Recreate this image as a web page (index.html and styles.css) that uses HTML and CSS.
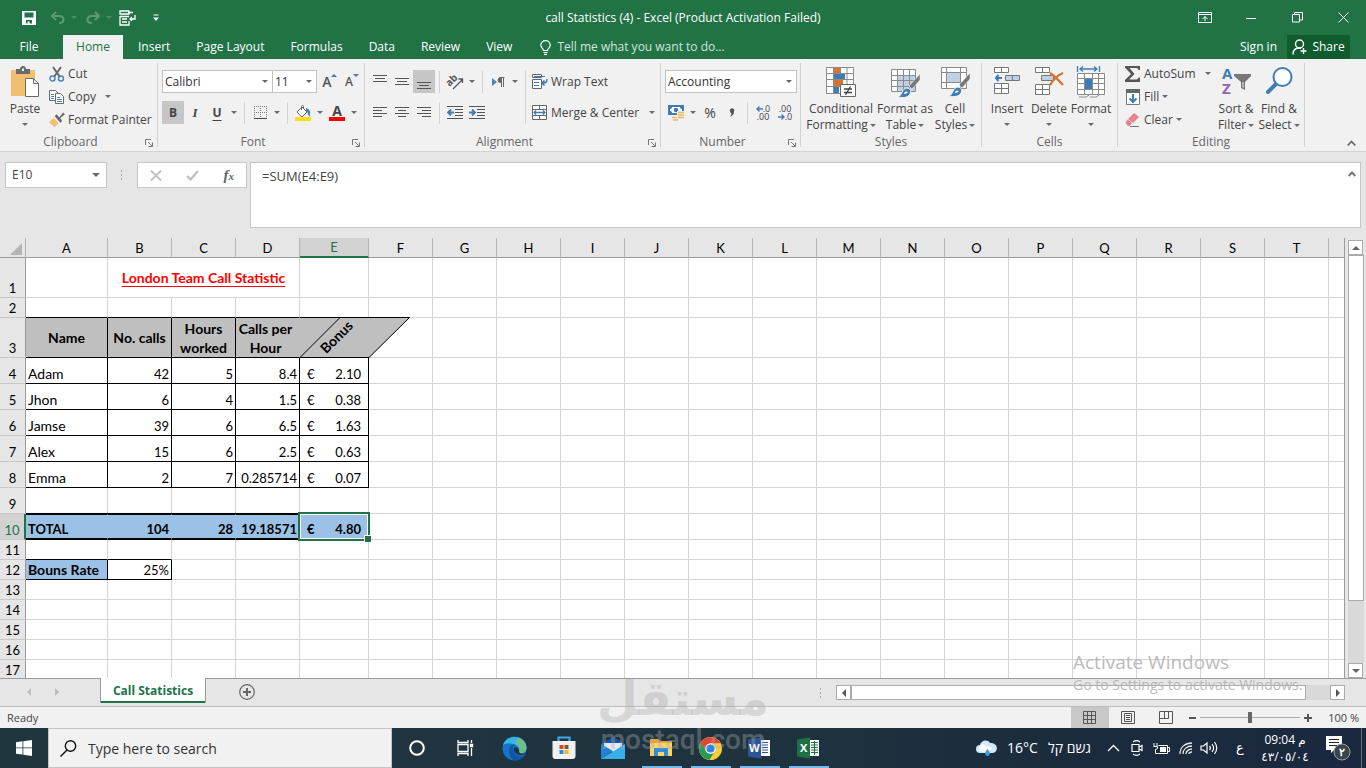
FILE: index.html
```html
<!DOCTYPE html>
<html lang="en">
<head>
<meta charset="utf-8">
<title>call Statistics (4) - Excel</title>
<link rel="stylesheet" href="styles.css">
</head>
<body>
<header class="titlebar">
  <div class="quick">
    <button class="qbtn" aria-label="Save"><svg width="16" height="16" viewBox="0 0 16 16"><path fill="#fff" fill-rule="evenodd" d="M1 1h14v14H1zM3.500 2.500v5h9v-5zM5 10v3.500h1.500v-2h2v2H11V10z"/></svg></button>
    <button class="qbtn wide" aria-label="Undo"><svg width="16" height="14" viewBox="0 0 16 14" fill="none" stroke="#5c9a76" stroke-width="2"><path d="M6 1 2 5l4 4M2 5h7c6 0 6 7 0 7"/></svg><span class="caret faint"></span></button>
    <button class="qbtn wide" aria-label="Redo"><svg width="16" height="14" viewBox="0 0 16 14" fill="none" stroke="#5c9a76" stroke-width="2"><path d="m10 1 4 4-4 4M14 5H7c-6 0-6 7 0 7"/></svg><span class="caret faint"></span></button>
    <button class="qbtn form" aria-label="Form"><svg width="17" height="16" viewBox="0 0 17 16" fill="none" stroke="#fff" stroke-width="1.300"><path d="M1 1h9v3H1zM9 2.500h5M1 6.500h9M1 6v9h9v-4M3 9h5M3 12h5M16 5v4h-5m2-2-2 2 2 2"/></svg></button>
    <button class="qbtn" aria-label="Customize"><svg width="8" height="8" viewBox="0 0 8 8"><path stroke="#fff" d="M1.500 1h5"/><path fill="#fff" d="M1 3.500h6L4 7z"/></svg></button>
  </div>
  <h1 class="doc-title">call Statistics (4) - Excel (Product Activation Failed)</h1>
  <div class="window-btns">
    <button aria-label="Ribbon options"><svg width="14" height="12" viewBox="0 0 14 12" fill="none" stroke="#fff"><path d="M.5.500h13v10H.500zM.5 2.500h13M7 9V4.500M4.500 7 7 4.500 9.500 7"/></svg></button>
    <button aria-label="Minimize"><svg width="10" height="10" viewBox="0 0 10 10"><path stroke="#fff" d="M0 5.500h10"/></svg></button>
    <button aria-label="Restore"><svg width="11" height="11" viewBox="0 0 11 11" fill="none" stroke="#fff"><path d="M.5 2.500h7v7.500h-7zM2.500 2.500v-2h8v7.500H8"/></svg></button>
    <button aria-label="Close"><svg width="11" height="11" viewBox="0 0 11 11"><path stroke="#fff" d="m.5.500 10 10m0-10-10 10"/></svg></button>
  </div>
</header>
<nav class="tabs">
  <button class="tab file">File</button>
  <button class="tab active">Home</button>
  <button class="tab">Insert</button>
  <button class="tab">Page Layout</button>
  <button class="tab">Formulas</button>
  <button class="tab">Data</button>
  <button class="tab">Review</button>
  <button class="tab">View</button>
  <button class="tell"><svg width="11" height="15" viewBox="0 0 11 15" fill="none" stroke="#fff" stroke-width="1.200"><path d="M3.500 10.500c0-2-2.700-2.500-2.700-5.300a4.700 4.500 0 0 1 9.400 0c0 2.800-2.700 3.300-2.700 5.300zM3.500 12.500h4M4 14.300h3"/></svg>Tell me what you want to do...</button>
  <div class="account">
    <button class="signin">Sign in</button>
    <button class="share"><svg width="16" height="16" viewBox="0 0 16 16" fill="none" stroke="#fff" stroke-width="1.400"><circle cx="7.500" cy="5" r="4"/><path d="M1 15.500C1 12 3 9.500 6 9l3 .3M11.500 9v6M8.500 12h6"/></svg>Share</button>
  </div>
</nav>

<section class="ribbon" aria-label="Ribbon">
  <div class="group g-clip">
    <div class="body">
      <button class="big w-paste"><svg width="30" height="32" viewBox="0 0 30 32"><path fill="#f0c070" d="M1 4h24v26H1z"/><path fill="#6b6b6b" d="M6 3h4c0-4 6-4 6 0h4v5H6z"/><path fill="#f0f0f0" d="M12 2.500h2V5h-2z"/><path fill="#fff" stroke="#6b6b6b" d="M15.500 12.500h8l5 5v13h-13z"/><path fill="none" stroke="#6b6b6b" d="M23.500 12.500v5h5"/></svg><span>Paste</span><span class="caret"></span></button>
      <div class="stack">
        <button class="line"><svg width="16" height="16" viewBox="0 0 16 16" fill="none"><path stroke="#666" stroke-width="2" d="m4 1 7 10M12 1 5 11"/><circle cx="3.500" cy="12.500" r="2.500" stroke="#4a82b8" stroke-width="1.400"/><circle cx="12" cy="12.500" r="2.500" stroke="#4a82b8" stroke-width="1.400"/></svg>Cut</button>
        <button class="line"><svg width="16" height="16" viewBox="0 0 16 16" fill="#fff" stroke="#6b6b6b"><path d="M.5 1.500h6l3 3v7h-9z"/><path d="M6.500 4.500h5l3 3v7h-8z"/><path fill="none" stroke="#4a82b8" d="M2 5.500h3M2 7.500h3M2 9.500h3M8 8.500h3M8 10.500h5M8 12.500h5"/></svg>Copy<span class="caret gap"></span></button>
        <button class="line"><svg width="16" height="16" viewBox="0 0 17 16"><path fill="#f0c070" d="m5 6 5 5-4 5-6-6z"/><path fill="#6b6b6b" d="m6 4 2-2 3 3 4-5 2 2-5 4 2 3-2 2z"/></svg>Format Painter</button>
      </div>
    </div>
    <div class="caption"><span>Clipboard</span><button class="launch" aria-label="Clipboard settings"><svg width="8" height="8" viewBox="0 0 8 8" fill="none" stroke="#777"><path d="M.5 6V.500H6M3 3l4 4M7.500 3.500v4h-4"/></svg></button></div>
  </div>

  <div class="group g-font">
    <div class="rows">
      <div class="row">
        <label class="combo c-font"><select aria-label="Font"><option>Calibri</option></select></label><label class="combo c-size"><select aria-label="Font size"><option>11</option></select></label>
        <button class="ib grow-a" aria-label="Increase font size"><b>A</b><i class="up"></i></button>
        <button class="ib shrink-a" aria-label="Decrease font size"><b>A</b><i class="down"></i></button>
      </div>
      <div class="row">
        <button class="ib on bold">B</button><button class="ib ital">I</button><button class="ib under">U</button><button class="ib drop" aria-label="Underline menu"><span class="caret"></span></button>
        <span class="sep"></span>
        <button class="ib" aria-label="Borders"><svg width="13" height="13" viewBox="0 0 13 13" fill="none" stroke="#777"><path stroke-dasharray="1 1" d="M0 .5h13M0 6.500h13M.5 0v12M6.500 0v12M12.500 0v12"/><path stroke="#444" d="M0 12.500h13"/></svg></button><button class="ib drop" aria-label="Borders menu"><span class="caret"></span></button>
        <span class="sep"></span>
        <button class="ib" aria-label="Fill colour"><svg width="16" height="16" viewBox="0 0 16 16"><path fill="#fff" stroke="#666" d="m7 2 5 5-5 5-5-5zM6.500 5V1.500c0-1.500 2-1.500 2 0V4"/><path fill="#4a82b8" d="M11 3c4 1 5 4 3.500 9C13 10 13 7 11 6z"/><path fill="#fedc1c" d="M0 12h16v4H0z"/></svg></button><button class="ib drop" aria-label="Fill menu"><span class="caret"></span></button>
        <button class="ib fontcolor" aria-label="Font colour"><b>A</b></button><button class="ib drop" aria-label="Font colour menu"><span class="caret"></span></button>
      </div>
    </div>
    <div class="caption"><span>Font</span><button class="launch" aria-label="Font settings"><svg width="8" height="8" viewBox="0 0 8 8" fill="none" stroke="#777"><path d="M.5 6V.500H6M3 3l4 4M7.500 3.500v4h-4"/></svg></button></div>
  </div>

  <div class="group g-align">
    <div class="body">
      <div class="rows align-left">
        <div class="row">
          <button class="ib" aria-label="Top align"><svg width="14" height="16" viewBox="0 0 14 16" stroke="#555"><path d="M0 1.500h14M2 4.500h10M0 7.500h14"/></svg></button><button class="ib" aria-label="Middle align"><svg width="14" height="16" viewBox="0 0 14 16" stroke="#555"><path d="M0 4.500h14M2 7.500h10M0 10.500h14"/></svg></button><button class="ib on" aria-label="Bottom align"><svg width="14" height="16" viewBox="0 0 14 16" stroke="#555"><path d="M0 8.500h14M2 11.500h10M0 14.500h14"/></svg></button>
          <span class="sep"></span>
          <button class="ib" aria-label="Orientation"><svg class="spill" width="17" height="16" viewBox="0 0 17 16"><text x="0" y="9" font-size="10" font-weight="700" fill="#555" transform="rotate(-45 6 8)">ab</text><path fill="none" stroke="#555" stroke-width="1.300" d="M6 15 15.500 5.500M11.500 5h4v4"/></svg></button><button class="ib drop" aria-label="Orientation menu"><span class="caret"></span></button>
          <span class="sep"></span>
          <button class="ib" aria-label="Text direction"><svg width="13" height="10" viewBox="0 0 13 10"><path fill="#4a82b8" d="M0 1v8l5-4z"/><path fill="#666" d="M12.500 0v1H12v9h-1V1h-1v9H9V6C4.500 6 4.500 0 9 0z"/></svg></button><button class="ib drop" aria-label="Direction menu"><span class="caret"></span></button>
        </div>
        <div class="row">
          <button class="ib" aria-label="Align left"><svg width="14" height="14" viewBox="0 0 14 14" stroke="#555"><path d="M0 1.500h14M0 4.500h9M0 7.500h14M0 10.500h9"/></svg></button><button class="ib" aria-label="Centre"><svg width="14" height="14" viewBox="0 0 14 14" stroke="#555"><path d="M0 1.500h14M3 4.500h8M0 7.500h14M3 10.500h8"/></svg></button><button class="ib" aria-label="Align right"><svg width="14" height="14" viewBox="0 0 14 14" stroke="#555"><path d="M0 1.500h14M5 4.500h9M0 7.500h14M5 10.500h9"/></svg></button>
          <span class="sep"></span>
          <button class="ib" aria-label="Decrease indent"><svg width="16" height="14" viewBox="0 0 16 14" fill="none" stroke="#555"><path d="M0 .5h16M8 3.500h8M8 6.500h8M8 9.500h8M0 12.500h16"/><path stroke="#3f7cb5" stroke-width="1.800" d="M7 6.500H1M4 3.500l-3 3 3 3"/></svg></button><button class="ib" aria-label="Increase indent"><svg width="16" height="14" viewBox="0 0 16 14" fill="none" stroke="#555"><path d="M0 .5h16M8 3.500h8M8 6.500h8M8 9.500h8M0 12.500h16"/><path stroke="#3f7cb5" stroke-width="1.800" d="M0 6.500h6M3 3.500l3 3-3 3"/></svg></button>
        </div>
      </div>
      <span class="sep tall"></span>
      <div class="rows align-right">
        <div class="row"><button class="line"><svg width="16" height="16" viewBox="0 0 16 16" fill="#fff" stroke="#666"><path d="M.5.500h9v3h-9zM.5 5.500h9v9h-9z"/><path fill="none" stroke="#3f7cb5" d="M2 2.500h11M2 8.500h5M2 11.500h5"/><path fill="none" stroke="#3f7cb5" stroke-width="1.500" d="M15 5c0 4-2 4-5 4m2.500-2.500L10 9l2.500 2.500"/></svg>Wrap Text</button></div>
        <div class="row"><button class="line"><svg width="16" height="16" viewBox="0 0 16 16" fill="#fff" stroke="#666"><path d="M.5.500h14v14H.500zM.5 4.500h14M.5 10.500h14M7.500.500v4M7.500 10.500v4"/><path fill="none" stroke="#3f7cb5" stroke-width="1.300" d="M2 7.500h11M4 5.500l-2 2 2 2M11 5.500l2 2-2 2"/></svg>Merge &amp; Center<span class="caret gap"></span></button></div>
      </div>
    </div>
    <div class="caption"><span>Alignment</span><button class="launch" aria-label="Alignment settings"><svg width="8" height="8" viewBox="0 0 8 8" fill="none" stroke="#777"><path d="M.5 6V.500H6M3 3l4 4M7.500 3.500v4h-4"/></svg></button></div>
  </div>

  <div class="group g-num">
    <div class="rows">
      <div class="row"><label class="combo c-num"><select aria-label="Number format"><option>Accounting</option></select></label></div>
      <div class="row">
        <button class="ib" aria-label="Accounting format"><svg width="17" height="17" viewBox="0 0 17 17"><path fill="#3f7cb5" d="M0 1h16v10H0z"/><path fill="#fff" d="M4 3h8c0 1.500 1 2 2 2v2c-1 0-2 .5-2 2H4C4 7.500 3 7 2 7V5c1 0 2-.5 2-2z"/><circle cx="8" cy="6" r="2.300" fill="#3f7cb5"/><path fill="#f0f0f0" d="M9 7h8v6H9zM4 12h8v5H4z"/><path stroke="#edb75f" stroke-width="1.500" d="M10 8.500h6M10 11h6M10 13.500h6M4 13.500h5M5 16h5"/></svg></button><button class="ib drop" aria-label="Currency menu"><span class="caret"></span></button>
        <button class="ib percent">%</button><button class="ib" aria-label="Comma style"><svg width="6" height="9" viewBox="0 0 6 9"><path fill="#555" d="M1 3a2.200 2.200 0 1 1 4 .5C5 6 4 7.500 1 9c1-2 1.500-3 1.500-3.500C1.500 5 1 4 1 3z"/></svg></button>
        <span class="sep"></span>
        <button class="ib dec" aria-label="Increase decimal"><span><svg width="7" height="6" viewBox="0 0 7 6" fill="none" stroke="#3f7cb5" stroke-width="1.400"><path d="M7 3H1M3.500.500 1 3l2.500 2.500"/></svg>.0</span><span>.00</span></button>
        <button class="ib dec" aria-label="Decrease decimal"><span>.00</span><span><svg width="7" height="6" viewBox="0 0 7 6" fill="none" stroke="#3f7cb5" stroke-width="1.400"><path d="M0 3h6M3.500.500 6 3 3.500 5.500"/></svg>.0</span></button>
      </div>
    </div>
    <div class="caption"><span>Number</span><button class="launch" aria-label="Number settings"><svg width="8" height="8" viewBox="0 0 8 8" fill="none" stroke="#777"><path d="M.5 6V.500H6M3 3l4 4M7.500 3.500v4h-4"/></svg></button></div>
  </div>

  <div class="group g-styles">
    <div class="body">
      <button class="big w-cond"><svg width="30" height="32" viewBox="0 0 30 32"><path fill="#fff" stroke="#8a8a8a" d="M.5 1.500h27v26H.500zM.5 7.500h27M.5 13.500h27M.5 20.500h27M7.500 1.500v26M14.500 1.500v26M21 1.500v26"/><path fill="#d9722e" d="M8 2h6v5H8zM8 14h9v6H8z"/><path fill="#3f7cb5" d="M8 8h11v5H8zM8 21h5v6H8z"/><path fill="#fff" stroke="#666" d="M14.500 18.500h15v12h-15z"/><path stroke="#444" stroke-width="1.300" d="M18 23h8M18 26.500h8M24.500 20.500l-5 8.500"/></svg><span>Conditional</span><span>Formatting<span class="caret in"></span></span></button>
      <button class="big w-fmt"><svg width="30" height="32" viewBox="0 0 30 32"><path fill="#fff" stroke="#8a8a8a" d="M1.500 3.500h24v22h-24zM1.500 9.500h24"/><path fill="#bdd0e4" d="M8 10h17v15H8z"/><path fill="none" stroke="#8a8a8a" d="M7.500 3.500v22M13.500 3.500v22M19.500 3.500v22M1.500 14.500h24M1.500 20.500h24"/><path fill="#777" stroke="#f0f0f0" stroke-width=".6" d="M30 8v6l-8 9-3-3z"/><path fill="#3f7cb5" stroke="#f0f0f0" d="M8 31c4-1 4-9 9-9 4 1 4 3 3 6-2 4-8 4-12 3z"/><path fill="#fff" d="M14 28c0-3 3-3 4-2-1 1-2 2-4 2z"/></svg><span>Format as</span><span>Table<span class="caret in"></span></span></button>
      <button class="big w-cell"><svg width="30" height="32" viewBox="0 0 30 32"><path fill="#fff" stroke="#8a8a8a" d="M1.500 1.500h25v21h-25zM1.500 6.500h25M1.500 16.500h25M6.500 1.500v21M20.500 1.500v21"/><path fill="#bdd0e4" d="M7 7h13v9H7z"/><path fill="#777" stroke="#f0f0f0" stroke-width=".6" d="M30 7v6l-8 9-3-3z"/><path fill="#3f7cb5" stroke="#f0f0f0" d="M9 30c4-1 4-9 9-9 4 1 4 3 3 6-2 4-8 4-12 3z"/><path fill="#fff" d="M15 27c0-3 3-3 4-2-1 1-2 2-4 2z"/></svg><span>Cell</span><span>Styles<span class="caret in"></span></span></button>
    </div>
    <div class="caption"><span>Styles</span></div>
  </div>

  <div class="group g-cells">
    <div class="body">
      <button class="big w-cells"><svg width="28" height="32" viewBox="0 0 28 32" fill="#fff" stroke="#777"><path d="M1.500 1.500h14v5h-14zM8.500 1.500v5M1.500 17.500h14v10h-14zM8.500 17.500v10M1.500 22.500h14"/><path fill="#bdd0e4" d="M12.500 9.500h14v5h-14zM19.500 9.500v5"/><path fill="none" stroke="#3f7cb5" stroke-width="2" d="M9 12H3M5.500 9 3 12l2.500 3"/></svg><span>Insert</span><span class="caret"></span></button>
      <button class="big w-cells"><svg width="30" height="32" viewBox="0 0 30 32" fill="#fff" stroke="#777"><path d="M1.500 1.500h14v5h-14zM8.500 1.500v5M1.500 18.500h14v10h-14zM8.500 18.500v10M1.500 23.500h14"/><path fill="#bdd0e4" d="M7.500 9.500h12v5h-12z"/><path fill="none" stroke="#d9722e" stroke-width="2.400" d="M16 7c4 2 10 9 13 12M29 7c-5 2-10 7-13 12"/></svg><span>Delete</span><span class="caret"></span></button>
      <button class="big w-cells"><svg width="30" height="32" viewBox="0 0 30 32" fill="#fff" stroke="#8a8a8a"><path d="M1.500 7.500h27v21h-27zM1.500 12.500h27M1.500 17.500h27M1.500 23.500h27M8.500 7.500v21M16.500 7.500v21M22.500 7.500v21"/><path fill="#3f7cb5" stroke="none" d="M9 13h7v10H9z"/><path fill="none" stroke="#3f7cb5" stroke-width="1.300" d="M1.500 0v6M23.500 0v6M4 3h17M7 .5 4 3l3 2.500M18 .5 21 3l-3 2.500"/><path d="M3 31h7l3-2M14 31h6l3-2"/></svg><span>Format</span><span class="caret"></span></button>
    </div>
    <div class="caption"><span>Cells</span></div>
  </div>

  <div class="group g-edit">
    <div class="body">
      <div class="stack edit">
        <button class="line"><svg width="16" height="16" viewBox="0 0 16 16"><path fill="#555" d="M0 0h15v4h-1.500c-.3-1.300-1-2-2.500-2H4.500l5 6-5.500 5.500h7c1.500 0 2.200-.7 2.500-2H15V16H0v-2l6-6-6-6.500z"/></svg>AutoSum<span class="caret gap"></span></button>
        <button class="line"><svg width="16" height="16" viewBox="0 0 16 16"><path fill="#fff" stroke="#777" d="M1.500.500h13v15h-13z"/><path fill="#666" d="M1 0h14v4H1z"/><path fill="none" stroke="#3f7cb5" stroke-width="2" d="M8 5v8M4.500 9.500 8 13l3.500-3.500"/></svg>Fill<span class="caret in"></span></button>
        <button class="line"><svg width="16" height="14" viewBox="0 0 16 14"><path fill="#e8838d" d="m9 0 5 4-6 6-5-4z"/><path fill="#e8838d" stroke="#e8838d" d="m2.500 7 4 3-2 2.500H3L1 10z"/><path stroke="#777" d="M5 13.500h9"/></svg>Clear<span class="caret in"></span></button>
      </div>
      <button class="big w-sort"><svg class="spill" width="30" height="32" viewBox="0 0 30 32"><text x="1" y="13" font-size="15" font-weight="700" fill="#3f7cb5">A</text><text x="1" y="28" font-size="15" font-weight="700" fill="#9163b5">Z</text><path fill="#777" d="M13 8h17v2l-6 6v8l-4-2v-6l-7-6z"/><path fill="#f0f0f0" d="m21.500 16 1 .2V22l-1-.7z"/></svg><span>Sort &amp;</span><span>Filter<span class="caret in"></span></span></button>
      <button class="big w-find"><svg width="30" height="32" viewBox="0 0 30 32"><path stroke="#3f7cb5" stroke-width="4" stroke-linecap="round" d="m4 26 8-8"/><circle cx="18.500" cy="11" r="9" fill="#fff" stroke="#3f7cb5" stroke-width="2"/></svg><span>Find &amp;</span><span>Select<span class="caret in"></span></span></button>
    </div>
    <div class="caption"><span>Editing</span></div>
  </div>
  <button class="collapse" aria-label="Collapse the ribbon"><svg width="9" height="7" viewBox="0 0 9 7" fill="none" stroke="#666" stroke-width="1.800"><path d="m.7 5.500 3.800-4 3.800 4"/></svg></button>
</section>

<section class="formula">
  <div class="namebox"><input aria-label="Name box" value="E10"><span class="caret"></span></div>
  <span class="dots"></span>
  <div class="fx">
    <button aria-label="Cancel"><svg width="12" height="11" viewBox="0 0 12 11"><path stroke="#c0c0c0" stroke-width="1.800" d="m1 .5 10 10m0-10-10 10"/></svg></button>
    <button aria-label="Enter"><svg width="13" height="11" viewBox="0 0 13 11" fill="none"><path stroke="#c0c0c0" stroke-width="2.400" d="m1 6 3.500 3.500L12 1"/></svg></button>
    <button class="fxb" aria-label="Insert function">f<small>x</small></button>
  </div>
  <div class="fbar"><textarea aria-label="Formula bar">=SUM(E4:E9)</textarea><button aria-label="Collapse formula bar"><svg width="8" height="6" viewBox="0 0 8 6" fill="none" stroke="#777" stroke-width="2"><path d="M.7 5 4 1.500 7.300 5"/></svg></button></div>
</section>

<main class="sheet">
  <div class="grid">
    <table>
      <colgroup><col class="k-head"><col class="k-a"><col><col><col><col class="k-e"><col><col><col><col><col><col><col><col><col><col><col><col><col><col><col><col class="k-rest"></colgroup>
      <thead><tr><th class="corner"><i></i></th><th>A</th><th>B</th><th>C</th><th>D</th><th class="sel">E</th><th>F</th><th>G</th><th>H</th><th>I</th><th>J</th><th>K</th><th>L</th><th>M</th><th>N</th><th>O</th><th>P</th><th>Q</th><th>R</th><th>S</th><th>T</th><th class="last"></th></tr></thead>
      <tbody>
        <tr class="h40"><th>1</th><td></td><td colspan="3" class="title">London Team Call Statistic</td><td></td></tr>
        <tr class="h20 pre"><th>2</th><td></td><td></td><td></td><td></td><td></td></tr>
        <tr class="h40 head"><th>3</th><td class="bk">Name</td><td class="bk">No. calls</td><td class="bk">Hours<br>worked</td><td class="bk noright">Calls per<br>Hour</td><td class="slant"><svg width="110" height="41" viewBox="0 0 110 41"><path fill="#bfbfbf" d="M0 1h109L69 41H0z"/><path fill="none" stroke="#000" d="M0 .5h109.500L69 40.500M40 .5 0 40.500M0 40.500h69"/></svg><span>Bonus</span></td></tr>
        <tr class="h26 box"><th>4</th><td>Adam</td><td>42</td><td>5</td><td>8.4</td><td class="acc"><div><span>€</span><span>2.10</span></div></td></tr>
        <tr class="h26 box"><th>5</th><td>Jhon</td><td>6</td><td>4</td><td>1.5</td><td class="acc"><div><span>€</span><span>0.38</span></div></td></tr>
        <tr class="h26 box"><th>6</th><td>Jamse</td><td>39</td><td>6</td><td>6.5</td><td class="acc"><div><span>€</span><span>1.63</span></div></td></tr>
        <tr class="h26 box"><th>7</th><td>Alex</td><td>15</td><td>6</td><td>2.5</td><td class="acc"><div><span>€</span><span>0.63</span></div></td></tr>
        <tr class="h26 box"><th>8</th><td>Emma</td><td>2</td><td>7</td><td>0.285714</td><td class="acc"><div><span>€</span><span>0.07</span></div></td></tr>
        <tr class="h26"><th>9</th><td></td><td></td><td></td><td></td><td></td></tr>
        <tr class="h26 total"><th class="sel">10</th><td class="tot">TOTAL</td><td class="tot">104</td><td class="tot">28</td><td class="tot">19.18571</td><td class="acc tot cursor"><div><span>€</span><span>4.80</span></div></td></tr>
        <tr class="h20 pre12"><th>11</th><td></td><td></td><td></td><td></td><td></td></tr>
        <tr class="h20"><th>12</th><td class="bk rate">Bouns Rate</td><td class="bk">25%</td><td></td><td></td><td></td></tr>
        <tr class="h20"><th>13</th></tr>
        <tr class="h20"><th>14</th></tr>
        <tr class="h20"><th>15</th></tr>
        <tr class="h20"><th>16</th></tr>
        <tr class="h20"><th>17</th></tr>
      </tbody>
    </table>
  </div>
  <div class="vscroll">
    <button class="sb" aria-label="Scroll up"><i class="t-up"></i></button>
    <div class="vthumb"></div>
    <div class="vtrack"></div>
    <button class="sb" aria-label="Scroll down"><i class="t-down"></i></button>
  </div>
</main>

<section class="sheetbar">
  <button class="nav" aria-label="Previous sheet"><i class="t-left pale"></i></button><button class="nav" aria-label="Next sheet"><i class="t-right pale"></i></button>
  <button class="sheettab">Call Statistics</button>
  <button class="add" aria-label="New sheet"><svg width="16" height="16" viewBox="0 0 16 16" fill="none" stroke="#666"><circle cx="8" cy="8" r="7.300" stroke-width="1.200"/><path stroke-width="2" d="M4 8h8M8 4v8"/></svg></button>
  <div class="hscroll">
    <span class="dots"></span>
    <button class="sb" aria-label="Scroll left"><i class="t-left"></i></button>
    <div class="hthumb"></div><div class="htrack"></div>
    <button class="sb" aria-label="Scroll right"><i class="t-right"></i></button>
  </div>
</section>

<footer class="status">
  <span>Ready</span>
  <div class="views">
    <button class="view on" aria-label="Normal view"><svg width="14" height="14" viewBox="0 0 14 14" fill="none" stroke="#555"><path d="M.5.500h12v12H.500zM4.500.500v12M8.500.500v12M.5 4.500h12M.5 8.500h12"/></svg></button>
    <button class="view" aria-label="Page layout view"><svg width="14" height="14" viewBox="0 0 14 14" fill="none" stroke="#555"><path d="M.5.500h13v12H.500zM3.500 2.500h7v8h-7zM5 4.500h4M5 6.500h4M5 8.500h4"/></svg></button>
    <button class="view" aria-label="Page break view"><svg width="14" height="14" viewBox="0 0 14 14" fill="none" stroke="#555"><path d="M.5.500h13v12H.500zM5.500.500v7M.5 7.500h9v-7"/></svg></button>
    <button class="zoom" aria-label="Zoom out"><i class="minus"></i></button>
    <input type="range" min="0" max="100" value="50" aria-label="Zoom">
    <button class="zoom" aria-label="Zoom in"><i class="minus plus"></i></button>
    <span class="pct">100 %</span>
  </div>
</footer>

<footer class="taskbar">
  <button class="start" aria-label="Start"><svg width="16" height="16" viewBox="0 0 16 16" fill="#fff"><path d="m0 2.200 6.500-.9v6.200H0zM7.300 1.200 16 0v7.500H7.300zM0 8.300h6.500v6.200L0 13.700zM7.300 8.300H16V16l-8.700-1.200z"/></svg></button>
  <label class="search"><svg width="17" height="17" viewBox="0 0 17 17" fill="none" stroke="#111" stroke-width="1.400"><circle cx="10.500" cy="6" r="5.200"/><path d="M7 10 .5 16.500"/></svg><input type="text" placeholder="Type here to search" aria-label="Search"></label>
  <button class="task" aria-label="Cortana"><svg width="16" height="16" viewBox="0 0 16 16"><circle cx="8" cy="8" r="6.800" fill="none" stroke="#fff" stroke-width="2"/></svg></button>
  <button class="task" aria-label="Task view"><svg width="17" height="16" viewBox="0 0 17 16" fill="none" stroke="#fff" stroke-width="1.300"><path d="M1 4.500h10v7H1zM1 0v2.500h10V0M1 16v-2.500h10V16M14.500 0v3M14.500 8v8"/><path fill="#fff" d="M13.500 4.500h2v2h-2z"/></svg></button>
  <button class="task" aria-label="Edge"><svg width="25" height="25" viewBox="0 0 25 25"><circle cx="12.500" cy="12.500" r="12" fill="#1673c8"/><path fill="#35b5e8" d="M1 9C4-2 23-2 24.500 11c0 5-4 7-8 6C20 10 10 5 1 9z"/><path fill="#6fbf8a" d="M16 1.500c6 2 8 6 8.500 10 0 5-4 7-8 5.500C19 13 17 9 13 8z"/><path fill="#0d56a6" d="M7 14c0-4 3-6 6-5-3 2-3 9 3 11 3 1 6-.5 7-1.500-2 5-8 7-12 5-3-2-4-6-4-9.500z"/><path fill="#20343e" d="M12 12c-1 4 3 8 9 7l3-2c-2 1-6 1-7-1 1-3-3-6-5-4z"/></svg></button>
  <button class="task" aria-label="Store"><svg width="24" height="24" viewBox="0 0 24 24"><path fill="none" stroke="#38a9e4" stroke-width="2.200" d="M6.500 6V1.500h11V6"/><path fill="#f1f1f1" d="M.5 5h23v15c0 2-1 3-3 3h-17c-2 0-3-1-3-3z"/><path fill="#e5411f" d="M7.500 9h4v4h-4z"/><path fill="#7b5a2a" d="M12.500 9h4v4h-4z"/><path fill="#1e90dd" d="M7.500 14h4v4h-4z"/><path fill="#f7b51d" d="M12.500 14h4v4h-4z"/></svg></button>
  <button class="task" aria-label="Mail"><svg width="24" height="22" viewBox="0 0 24 22"><path fill="#1356a8" d="m0 7 12-7 12 7v4H0z"/><path fill="#e8eef5" d="M3 6h18v4l-9 5-9-5z"/><path fill="#1f82d2" d="M0 7l12 7L0 22z"/><path fill="#39b0ea" d="M24 7v15H0z"/></svg></button>
  <button class="task run" aria-label="File Explorer"><svg width="23" height="18" viewBox="0 0 23 18"><path fill="#e9a13a" d="M0 0h8l2 2h12v5H0z"/><path fill="#fbd567" d="M0 4h22v13H0z"/><path fill="#2f8fd8" d="M4 9h14v8h-4v-4H8v4H4z"/></svg></button>
  <button class="task run" aria-label="Chrome"><svg width="23" height="23" viewBox="0 0 24 24"><circle cx="12" cy="12" r="12" fill="#fdcd38"/><path fill="#e04636" d="M1.600 6A12 12 0 0 1 22.400 6.500H12L7 14z"/><path fill="#279a55" d="M1.600 6A12 12 0 0 0 11 24l5-8.500-4 1.500-5-3z"/><circle cx="12" cy="12" r="5.500" fill="#fff"/><circle cx="12" cy="12" r="4.300" fill="#2e86e0"/></svg></button>
  <button class="task run" aria-label="Word"><svg width="23" height="22" viewBox="0 0 23 22"><path fill="#fff" d="M12 3h10v16H12z"/><path stroke="#2b579a" d="M14 5.500h6M14 8h6M14 10.500h6M14 13h6M14 15.500h6"/><path fill="#2b579a" d="m0 2.500 13-2v21l-13-2z"/><text x="1" y="15" font-size="11" font-weight="700" fill="#fff">W</text></svg></button>
  <button class="task run" aria-label="Excel"><svg width="23" height="22" viewBox="0 0 23 22"><path fill="#fff" d="M12 3h10v16H12z"/><path stroke="#217346" stroke-width="1.200" d="M14 5.500h7M14 8h7M14 10.500h7M14 13h7M14 15.500h7M17.500 4v14"/><path fill="#1e7145" d="m0 2.500 13-2v21l-13-2z"/><text x="3" y="15" font-size="11" font-weight="700" fill="#fff">X</text></svg></button>
  <div class="tray">
    <button class="weather"><svg width="21" height="17" viewBox="0 0 21 17"><path fill="#cfeaf8" d="M4 13a4 4 0 0 1 0-8C5 0 12-1 14 3c5 0 8 3 6.500 7-1 3-4 3-5 3z"/><path fill="#fff" d="M4 5c3-2 6 0 6 2 3-2 6 0 6 2-3 3-9 3-13 2z"/><path fill="#3b9be8" d="M11.500 9c3 3 3 7 0 7s-3-4 0-7z"/></svg><span>16°C</span><span dir="rtl" lang="he">גשם קל</span></button>
    <button class="ti" aria-label="Show hidden icons"><svg width="13" height="8" viewBox="0 0 13 8" fill="none" stroke="#fff" stroke-width="1.300"><path d="m1 7 5.500-5.500L12 7"/></svg></button>
    <button class="ti" aria-label="Meet now"><svg width="12" height="16" viewBox="0 0 12 16" fill="none" stroke="#fff" stroke-width="1.200"><path d="M1 4.500h7v7H1zM8 7l3-1.500v5L8 9M2 2c2-1.500 5-1.500 7 0M2 14c2 1.500 5 1.500 7 0"/></svg></button>
    <button class="ti" aria-label="Battery"><svg width="17" height="11" viewBox="0 0 17 11"><path fill="none" stroke="#fff" d="M5.500 2.500h9v8h-9M14.500 4.500h2v4h-2M1 0v3M4 0v3M.5 3.500h4v2l-2 1v4h3"/><path fill="#fff" d="M7 4h6v5H7z"/></svg></button>
    <button class="ti" aria-label="Network"><svg width="13" height="13" viewBox="0 0 13 13" fill="none" stroke="#e6e6e6" stroke-width="1.300"><path d="M1 12C1 5 6 1 13 1M4 12c0-5 4-8 9-8M7 12c0-3 3-5 6-5M10 12c0-1.500 1-2 3-2"/></svg></button>
    <button class="ti" aria-label="Volume"><svg width="18" height="14" viewBox="0 0 18 14" fill="none" stroke="#fff" stroke-width="1.200"><path d="M1 5h2.500L7 2v10L3.500 9H1zM9.500 5c1 1.200 1 2.800 0 4M12 3c2 2.500 2 5.500 0 8M14.500 1c3 4 3 8 0 12"/></svg></button>
    <button class="lang" lang="ar">ع</button>
    <button class="clock" lang="ar"><span dir="ltr">09:04 م</span><span dir="ltr">٤٣/٠٥/٠٤</span></button>
    <button class="note" aria-label="Notifications"><svg width="26" height="26" viewBox="0 0 26 26"><path fill="#fff" d="M1 1h16v14H9l-3 3v-3H1z"/><path stroke="#222" stroke-width="1.200" d="M4 4.500h10M4 7.500h10M4 10.500h10"/><circle cx="17" cy="17" r="8" fill="#38464c" stroke="#9aa0a4"/><text x="14" y="21" font-size="11" font-weight="700" fill="#fff">٢</text></svg></button>
  </div>
</footer>

<div class="activate"><strong>Activate Windows</strong><span>Go to Settings to activate Windows.</span></div>
<div class="brand"><span class="brand-ar" lang="ar">مستقل</span><span class="brand-en">mostaql.com</span></div>
<script src="grid.js"></script>
</body>
</html>
```
FILE: styles.css
```css
* { box-sizing: border-box; }
body {
  margin: 0;
  height: 100vh;
  display: flex;
  flex-direction: column;
  overflow: hidden;
  position: relative;
  background: #e6e6e6;
  color: #444;
  font: 12px/16px "Open Sans", "Noto Sans", sans-serif;
}
button, input, select, textarea { font: inherit; color: inherit; }
button { background: none; border: 0; padding: 0; margin: 0; white-space: nowrap; }
svg { display: block; flex: none; }
svg.spill { overflow: visible; }
svg text { font-family: "Open Sans", sans-serif; }

.caret { display: inline-block; flex: none; border: 3px solid transparent; border-top-color: #6b6b6b; border-bottom: 0; }
.caret.in { margin-left: 2px; vertical-align: middle; }
.caret.gap { margin-left: 6px; }
.caret.faint { border-top-color: #4c9068; }

.titlebar { flex: none; height: 35px; background: #217346; color: #fff; display: grid; grid-template-columns: 1fr auto 1fr; align-items: center; }
.quick { display: flex; align-items: center; height: 30px; padding-left: 18px; }
.qbtn { width: 22px; display: flex; justify-content: center; align-items: center; gap: 5px; }
.qbtn.wide { width: 35px; }
.quick .qbtn:nth-child(2) { margin-left: 6px; }
.qbtn.form { margin: 0 7px 0 0; }
.doc-title { margin: 0; font-size: 12px; font-weight: 400; }
.window-btns { display: flex; justify-content: flex-end; height: 30px; }
.window-btns button { width: 46px; display: flex; justify-content: center; align-items: center; }

.tabs { flex: none; height: 24px; background: #217346; color: #fff; display: flex; }
.tab { padding: 0 13px; }
.tab.file { width: 58px; margin-right: 5px; }
.tab.active { background: #f1f1f1; color: #217346; width: 60px; padding: 0; margin-right: 2px; }
.tell { display: flex; align-items: center; gap: 6px; color: #d3e3da; margin-left: 15px; }
.account { margin-left: auto; display: flex; padding-right: 16px; }
.signin { padding: 0 10px; }
.share { background: #0f5c2f; width: 63px; display: flex; justify-content: center; align-items: center; gap: 4px; }

.ribbon { flex: none; height: 93px; background: #f1f1f1; border-bottom: 1px solid #d2d2d2; display: flex; padding: 4px 0; position: relative; }
.group { flex: none; display: flex; flex-direction: column; justify-content: space-between; border-right: 1px solid #d4d4d4; }
.g-clip { width: 158px; }
.g-font { width: 207px; }
.g-align { width: 296px; }
.g-num { width: 140px; }
.g-styles { width: 181px; }
.g-cells { width: 136px; }
.g-edit { width: 187px; }
.body { display: flex; padding-left: 4px; }
.caption { display: flex; align-items: center; justify-content: center; height: 10px; color: #666; position: relative; padding-right: 16px; }
.g-styles .caption, .g-cells .caption, .g-edit .caption { padding-right: 0; }
.launch { position: absolute; right: 4px; top: 2px; }
.big { display: flex; flex-direction: column; align-items: center; }
.big svg { margin: 3px 0; }
.big > .caret { margin-top: 6px; }
.w-paste { width: 42px; }
.w-cond { width: 72px; }
.w-fmt { width: 56px; }
.w-cell { width: 44px; }
.w-cells { width: 42px; }
.w-sort { width: 44px; margin-left: 2px; }
.w-find { width: 42px; }
.stack { display: flex; flex-direction: column; padding-left: 3px; margin-top: -1px; }
.stack.edit { width: 90px; }
.line { display: flex; align-items: center; gap: 3px; height: 23px; }
.line .caret.in { margin-left: 0; }
.rows { display: flex; flex-direction: column; gap: 8px; padding: 7px 0 0 4px; }
.row { display: flex; align-items: center; height: 23px; }
.ib { width: 22px; height: 23px; flex: none; display: flex; align-items: center; justify-content: center; position: relative; }
.ib.on { background: #c6c6c6; }
.ib.drop { width: 12px; }
.bold { font-weight: 700; }
.ital { font: italic 700 13px "Liberation Serif", serif; }
.under { font-weight: 700; text-decoration: underline; text-underline-offset: 3px; }
.sep { width: 1px; height: 22px; background: #d4d4d4; margin: 0 4px; flex: none; }
.sep.tall { height: 54px; margin: 7px 6px 0 0; }
.combo { position: relative; height: 23px; display: flex; background: #fff; border: 1px solid #c3c3c3; }
.combo::after { content: ""; position: absolute; right: 4px; top: 9px; border: 3px solid transparent; border-top-color: #666; border-bottom: 0; pointer-events: none; }
.combo select { appearance: none; border: 0; background: none; width: 100%; padding: 0 2px; outline: 0; color: #333; }
.c-font { width: 111px; }
.c-size { width: 44px; border-left: 0; }
.c-num { width: 132px; }
.grow-a { font-size: 14px; margin-left: 1px; }
.shrink-a { font-size: 12px; }
.grow-a b, .shrink-a b { font-weight: 600; color: #555; padding-right: 4px; }
.up, .down { position: absolute; right: 3px; top: 4px; border: 3px solid transparent; }
.up { border-bottom-color: #3f7cb5; border-top: 0; }
.down { border-top-color: #3f7cb5; border-bottom: 0; }
.fontcolor b { width: 16px; height: 16px; line-height: 12px; border-bottom: 4px solid #f00; font-size: 14px; text-align: center; }
.align-left { width: 156px; padding-left: 0; }
.align-right { padding-left: 0; }
.align-right .caret.gap { margin-left: 7px; }
.percent { font-size: 14px; }
.dec { flex-direction: column; font-size: 9px; line-height: 8px; }
.dec span { display: flex; align-items: center; }
.collapse { position: absolute; right: 10px; bottom: 4px; }

.formula { flex: none; height: 86px; padding: 10px 5px; display: flex; align-items: flex-start; }
.namebox { width: 102px; height: 26px; background: #fff; border: 1px solid #c6c6c6; display: flex; align-items: center; padding: 0 6px; }
.namebox input { border: 0; padding: 0; width: 80px; flex: 1; outline: 0; }
.namebox .caret { border-width: 4px 4px 0; }
.dots { width: 3px; height: 11px; margin: 7px 14px 0 13px; background: radial-gradient(circle, #aaa 1px, transparent 1px) 0 0 / 3px 4px; }
.fx { width: 110px; height: 26px; background: #fff; border: 1px solid #c6c6c6; display: flex; justify-content: space-around; align-items: center; }
.fxb { font: italic 700 15px "Liberation Serif", serif; color: #666; }
.fxb small { font-size: 11px; }
.fbar { flex: 1; margin-left: 3px; height: 66px; background: #fff; border: 1px solid #c6c6c6; display: flex; align-items: flex-start; }
.fbar textarea { flex: 1; height: 60px; border: 0; outline: 0; resize: none; padding: 5px 11px; background: none; overflow: hidden; font-size: 13px; }
.fbar button { padding: 8px 4px; }

.sheet { flex: 1; min-height: 0; display: flex; overflow: hidden; }
.grid { flex: 1; overflow: hidden; border-right: 1px solid #9b9b9b; }
table { width: 100%; table-layout: fixed; border-collapse: separate; border-spacing: 0; font: 13px/18px Lato, "Open Sans", sans-serif; color: #000; }
col { width: 64px; }
.k-head { width: 26px; }
.k-a { width: 82px; }
.k-e { width: 69px; }
.k-rest { width: auto; }
th { font-weight: 400; background: #e6e6e6; padding: 0; }
thead th { height: 20px; border-right: 1px solid #b5b5b5; border-bottom: 1px solid #9b9b9b; }
thead th.last { border-right: 0; }
thead th.sel { background: #d2d2d2; color: #217346; border-bottom: 2px solid #217346; line-height: 17px; }
.corner i { display: block; margin: 3px 3px 0 auto; width: 12px; height: 12px; background: #b4b4b4; clip-path: polygon(100% 0, 100% 100%, 0 100%); }
tbody th { border-right: 1px solid #9b9b9b; border-bottom: 1px solid #c9c9c9; vertical-align: bottom; }
tbody th.sel { background: #d2d2d2; color: #217346; border-right: 2px solid #217346; }
td { background: #fff; border-right: 1px solid #d4d4d4; border-bottom: 1px solid #d4d4d4; padding: 0 2px; vertical-align: bottom; text-align: right; white-space: nowrap; }
td:last-child { border-right: 0; }
th + td { text-align: left; font-size: 14px; }
.h20 { height: 20px; }
.h26 { height: 26px; }
.h40 { height: 40px; }
td.title { color: #f00; font-weight: 700; font-size: 14px; text-decoration: underline; text-underline-offset: 3px; text-align: center; vertical-align: middle; }
.pre td:nth-child(-n+6) { border-bottom-color: #000; }
td.bk, .box td:nth-child(-n+6) { border-color: #000; }
.head td.bk { background: #bfbfbf; font-weight: 700; font-size: 14px; text-align: center; vertical-align: middle; line-height: 19px; padding: 0; }
.head td.noright { border-right-color: #bfbfbf; padding-right: 4px; }
.slant { position: relative; overflow: visible; border-color: #000; }
.slant svg { position: absolute; left: 0; top: -1px; z-index: 1; }
.slant span { position: absolute; z-index: 2; left: 17px; top: 10px; font-weight: 700; font-size: 14px; transform: rotate(-45deg); }
.acc { position: relative; }
.acc div { display: flex; justify-content: space-between; padding: 0 5px; }
td.tot { background: #9bc2e6; font-weight: 700; font-size: 13px; border-right-color: #9bc2e6; border-bottom: 2px solid #000; box-shadow: 0 -1px #000; border-top: 1px solid #000; line-height: 17px; }
.total .cursor { box-shadow: none; border-color: #9bc2e6; border-width: 0 1px 2px 0; }
.cursor::after { content: ""; position: absolute; inset: -2px -2px -3px -2px; border: 2px solid #217346; outline: 1px solid #fff; outline-offset: -3px; }
.cursor::before { content: ""; position: absolute; right: -3px; bottom: -4px; width: 6px; height: 6px; background: #217346; border: solid #fff; border-width: 1px 0 0 1px; z-index: 1; }
.pre12 td:nth-child(-n+3) { border-bottom-color: #000; }
td.rate { background: #9bc2e6; font-weight: 700; }

.vscroll { width: 21px; flex: none; padding: 2px 2px 0 3px; display: flex; flex-direction: column; }
.sb { width: 15px; height: 15px; flex: none; background: #fff; border: 1px solid #ababab; display: flex; align-items: center; justify-content: center; }
.vthumb { flex: 347; background: #fff; border: 1px solid #ababab; }
.vtrack { flex: 62; background: #d9d9d9; }
.t-up, .t-down, .t-left, .t-right { border: 4px solid transparent; }
.t-up { border-bottom-color: #666; border-top: 0; }
.t-down { border-top-color: #666; border-bottom: 0; }
.t-left { border-right-color: #555; border-left: 0; }
.t-right { border-left-color: #555; border-right: 0; }
.t-left.pale { border-right-color: #bcbcbc; }
.t-right.pale { border-left-color: #bcbcbc; }

.sheetbar { flex: none; height: 28px; border-top: 1px solid #9b9b9b; display: flex; align-items: flex-start; padding-left: 15px; }
.nav { width: 28px; height: 25px; display: flex; align-items: center; justify-content: center; }
.sheettab { width: 106px; height: 25px; margin: -1px 0 0 29px; padding-top: 1px; background: #fff; border: solid #9b9b9b; border-width: 0 1px; box-shadow: inset 0 -2px #217346; color: #217346; font-weight: 700; }
.add { margin: 5px 0 0 33px; }
.hscroll { width: 539px; margin: 6px 21px 0 auto; display: flex; }
.hscroll .dots { margin: 2px 14px 0 13px; }
.hthumb { flex: 455; height: 15px; background: #fff; border: 1px solid #ababab; }
.htrack { flex: 24; height: 15px; background: #d9d9d9; }

.status { flex: none; height: 22px; border-top: 1px solid #bdbdbd; background: #f1f1f1; display: flex; justify-content: space-between; align-items: center; padding-left: 7px; font-size: 11px; }
.views { display: flex; align-items: center; height: 21px; padding-right: 7px; }
.view { width: 38px; height: 21px; display: flex; align-items: center; justify-content: center; }
.view.on { background: #c8c8c8; }
.zoom { width: 15px; height: 15px; display: flex; align-items: center; justify-content: center; }
.minus { width: 7px; height: 2px; background: #555; }
.plus { height: 8px; width: 8px; background: linear-gradient(#555 0 0) center / 8px 2px no-repeat, linear-gradient(#555 0 0) center / 2px 8px no-repeat; }
.views input { appearance: none; width: 100px; height: 11px; margin: 0; background: linear-gradient(#ababab 0 0) center / 100% 1px no-repeat; }
.views input::-webkit-slider-thumb { appearance: none; width: 4px; height: 11px; background: #666; }
.pct { width: 44px; text-align: right; }

.taskbar { flex: none; height: 40px; background: linear-gradient(90deg, #20363f, #1f333f 55%, #1b2b3d 80%, #1b2840); color: #fff; display: flex; }
.start { width: 48px; display: flex; align-items: center; justify-content: center; }
.search { width: 344px; background: #f1f1f1; border: 1px solid #c3c3c3; color: #333; display: flex; align-items: center; padding-left: 11px; gap: 11px; }
.search input { flex: 1; min-width: 0; border: 0; padding: 1px 0 0; background: none; outline: 0; font-size: 14px; line-height: 20px; }
.search input::placeholder { color: #333; opacity: 1; }
.task { width: 49px; display: flex; align-items: center; justify-content: center; }
.run { background: linear-gradient(#76b9ed 0 0) center bottom / 40px 2px no-repeat; }
.tray { margin-left: auto; display: flex; align-items: center; padding-right: 4px; }
.weather { display: flex; align-items: center; gap: 10px; font: 14px/20px "Open Sans", "DejaVu Sans", sans-serif; margin-right: 10px; }
.ti { width: 24px; height: 40px; display: flex; align-items: center; justify-content: center; }
.lang { width: 38px; font: 13px/20px "DejaVu Sans", sans-serif; }
.clock { width: 52px; display: flex; flex-direction: column; align-items: center; font: 12px/17px "Open Sans", "DejaVu Sans", sans-serif; }
.note { width: 51px; display: flex; justify-content: center; border-right: 1px solid #66707c; height: 40px; align-items: center; padding-left: 4px; }

.activate { position: absolute; right: 58px; bottom: 73px; display: flex; flex-direction: column; color: #b4b4b4; pointer-events: none; font-size: 14px; line-height: 20px; opacity: .9; width: 235px; white-space: nowrap; }
.activate strong { font-size: 19px; line-height: 26px; font-weight: 400; }
.brand { position: absolute; left: 50%; bottom: 14px; width: 164px; margin-left: -82px; display: flex; flex-direction: column; align-items: center; color: rgba(170, 170, 170, .4); pointer-events: none; white-space: nowrap; }
.brand-ar { font: 700 47px/54px "DejaVu Sans", sans-serif; }
.brand-en { font: 500 28px/28px Roboto, sans-serif; }
```
FILE: grid.js
```js
// Fill every body row out to the last visible column.
document.querySelectorAll("tbody tr").forEach(function (row) {
  var used = 0;
  Array.prototype.forEach.call(row.cells, function (c) { used += c.colSpan; });
  for (; used < 22; used++) row.appendChild(document.createElement("td"));
});
```
